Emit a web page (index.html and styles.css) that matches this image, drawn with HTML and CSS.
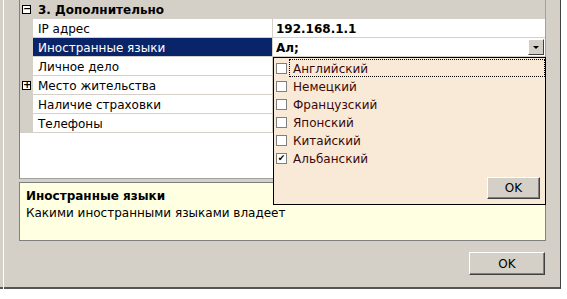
FILE: index.html
```html
<!DOCTYPE html>
<html lang="ru">
<head>
    <meta charset="UTF-8">
    <meta name="viewport" content="width=device-width, initial-scale=1.0">
    <title>Свойства</title>
    <link rel="stylesheet" href="styles.css">
</head>
<body>
    <div class="window">
        <div class="frame">
            <div class="grid">
                <div class="row category">
                    <span class="gutter"><span class="toggle">&minus;</span></span>
                    <span class="cat-name">3. Дополнительно</span>
                </div>
                <div class="row">
                    <span class="gutter"></span>
                    <span class="name">IP адрес</span>
                    <span class="value">192.168.1.1</span>
                </div>
                <div class="row selected">
                    <span class="gutter"></span>
                    <span class="name">Иностранные языки</span>
                    <span class="value">Ал;<span class="drop-btn"><span class="arrow"></span></span></span>
                </div>
                <div class="row">
                    <span class="gutter"></span>
                    <span class="name">Личное дело</span>
                    <span class="value"></span>
                </div>
                <div class="row">
                    <span class="gutter"><span class="toggle">+</span></span>
                    <span class="name">Место жительства</span>
                    <span class="value"></span>
                </div>
                <div class="row">
                    <span class="gutter"></span>
                    <span class="name">Наличие страховки</span>
                    <span class="value"></span>
                </div>
                <div class="row">
                    <span class="gutter"></span>
                    <span class="name">Телефоны</span>
                    <span class="value"></span>
                </div>
            </div>

            <div class="description">
                <div class="desc-title">Иностранные языки</div>
                <div class="desc-text">Какими иностранными языками владеет</div>
            </div>

            <div class="buttons">
                <button class="btn ok-btn">OK</button>
            </div>
        </div>

        <div class="popup">
            <div class="item focused"><span class="check"></span><span class="label">Английский</span></div>
            <div class="item"><span class="check"></span><span class="label">Немецкий</span></div>
            <div class="item"><span class="check"></span><span class="label">Французский</span></div>
            <div class="item"><span class="check"></span><span class="label">Японский</span></div>
            <div class="item"><span class="check"></span><span class="label">Китайский</span></div>
            <div class="item"><span class="check checked">&#10004;</span><span class="label">Альбанский</span></div>
            <div class="popup-buttons">
                <button class="btn popup-ok">OK</button>
            </div>
        </div>
    </div>
</body>
</html>
```

FILE: styles.css
```css
body {
    margin: 0;
    background: #fff;
    font-family: 'DejaVu Sans', Verdana, sans-serif;
    font-size: 12px;
    color: #000;
}
.window {
    position: relative;
    width: 561px;
    height: 289px;
    padding-left: 3px;
    box-sizing: border-box;
    background: #d4d0c8;
    border-right: 1px solid #404040;
    border-bottom: 2px solid #555;
}
.frame {
    width: 543px;
    height: 289px;
    box-sizing: border-box;
    border-left: 1px solid #fff;
    padding-left: 15px;
}
.grid {
    width: 527px;
    height: 179px;
    box-sizing: border-box;
    background: #fff;
    border-left: 1px solid #808080;
    border-right: 1px solid #a0a0a0;
    border-bottom: 1px solid #a0a0a0;
}
.row {
    display: flex;
    height: 19px;
    box-sizing: border-box;
    border-bottom: 1px solid #d4d0c8;
    line-height: 21px;
}
.row > span {
    overflow: hidden;
}
.gutter {
    width: 13px;
    flex: none;
    background: #d4d0c8;
    position: relative;
}
.row > .gutter {
    overflow: visible;
}
.toggle {
    position: absolute;
    left: 2px;
    top: 5px;
    width: 9px;
    height: 9px;
    box-sizing: border-box;
    border: 1px solid #000;
    background: #fff;
    font-size: 10px;
    line-height: 6px;
    text-align: center;
    font-weight: bold;
}
.category {
    background: #d4d0c8;
}
.cat-name {
    padding-left: 5px;
    font-weight: bold;
}
.name {
    width: 240px;
    flex: none;
    padding-left: 5px;
    box-sizing: border-box;
    border-right: 1px solid #d4d0c8;
}
.value {
    position: relative;
    flex: 1;
    padding-left: 3px;
    font-weight: bold;
}
.selected .name {
    background: #0a246a;
    color: #fff;
}
.drop-btn {
    position: absolute;
    right: 1px;
    top: 1px;
    width: 16px;
    height: 16px;
    box-sizing: border-box;
    background: #d4d0c8;
    border: 1px solid;
    border-color: #fff #404040 #404040 #fff;
    display: flex;
    align-items: center;
    justify-content: center;
}
.arrow {
    width: 0;
    height: 0;
    border-left: 3px solid transparent;
    border-right: 3px solid transparent;
    border-top: 3px solid #000;
}
.description {
    width: 527px;
    height: 59px;
    margin-top: 3px;
    box-sizing: border-box;
    background: #ffffe1;
    border: 1px solid #808080;
    padding: 5px 6px;
    line-height: 17px;
}
.desc-title {
    font-weight: bold;
}
.buttons {
    display: flex;
    justify-content: flex-end;
    width: 527px;
    padding-right: 1px;
    box-sizing: border-box;
    margin-top: 11px;
}
.btn {
    font-family: inherit;
    font-size: 12px;
    background: #d4d0c8;
    border: 1px solid;
    border-color: #fff #404040 #404040 #fff;
    box-shadow: inset -1px -1px 0 #808080;
    padding: 0;
    color: #000;
}
.ok-btn {
    width: 76px;
    height: 23px;
}
.popup {
    position: absolute;
    left: 273px;
    top: 57px;
    width: 273px;
    height: 148px;
    box-sizing: border-box;
    background: #f9e9d7;
    border: 1px solid #000;
    padding: 1px 0 0 2px;
}
.item {
    display: flex;
    align-items: center;
    height: 18px;
    color: #3a0a0a;
}
.check {
    width: 11px;
    height: 11px;
    box-sizing: border-box;
    border: 1px solid #808080;
    background: #fff;
    font-size: 9px;
    line-height: 9px;
    text-align: center;
    color: #000;
    flex: none;
}
.label {
    margin-left: 2px;
    padding-left: 3px;
    flex: 1;
    height: 18px;
    line-height: 18px;
    box-sizing: border-box;
    border: 1px dotted transparent;
}
.focused .label {
    border-color: #000;
}
.popup-buttons {
    display: flex;
    justify-content: flex-end;
    padding-right: 5px;
    margin-top: 10px;
}
.popup-ok {
    width: 53px;
    height: 22px;
}
```
